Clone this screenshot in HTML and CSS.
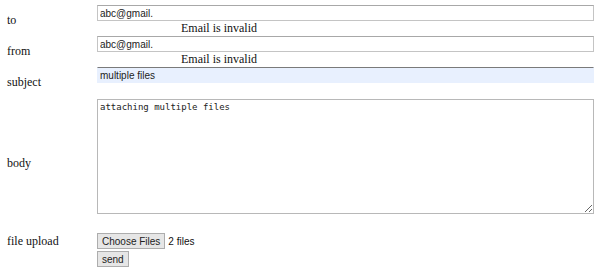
FILE: index.html
```html
<!DOCTYPE html>
<html lang="en">
<head>
    <meta charset="UTF-8">
    <title>Send mail</title>
    <link rel="stylesheet" href="styles.css">
</head>
<body>
    <form class="mail-form">
        <div class="row">
            <label class="label">to</label>
            <div class="field">
                <input type="text" class="text-input" value="abc@gmail." spellcheck="false">
                <div class="msg">Email is invalid</div>
            </div>
        </div>
        <div class="row">
            <label class="label">from</label>
            <div class="field">
                <input type="text" class="text-input" value="abc@gmail." spellcheck="false">
                <div class="msg">Email is invalid</div>
            </div>
        </div>
        <div class="row">
            <label class="label">subject</label>
            <div class="field">
                <input type="text" class="text-input filled" value="multiple files" spellcheck="false">
                <div class="msg"></div>
            </div>
        </div>
        <div class="row">
            <label class="label">body</label>
            <div class="field">
                <textarea class="body-input" spellcheck="false">attaching multiple files</textarea>
                <div class="msg"></div>
            </div>
        </div>
        <div class="row upload-row">
            <label class="label">file upload</label>
            <div class="field file-field">
                <button type="button" class="btn">Choose Files</button>
                <span class="file-count">2 files</span>
            </div>
        </div>
        <div class="row">
            <span class="label"></span>
            <div class="field">
                <button type="button" class="btn">send</button>
            </div>
        </div>
    </form>
</body>
</html>
```

FILE: styles.css
```css
body {
    margin: 0;
    padding: 5px 0 0 7px;
    font-family: "Liberation Serif", "Times New Roman", serif;
    font-size: 12px;
    color: #111;
    background: #fff;
}

.row {
    display: flex;
    align-items: center;
    margin-bottom: 1px;
}

.label {
    width: 90px;
    flex: none;
}

.field {
    width: 497px;
}

.text-input {
    display: block;
    box-sizing: border-box;
    width: 497px;
    height: 16px;
    margin: 0;
    padding: 0 2px;
    border: 1px solid #c4c4c4;
    border-top-color: #a8a8a8;
    font-family: "Liberation Sans", Arial, sans-serif;
    font-size: 10px;
    color: #222;
    outline: none;
}

.text-input.filled {
    background: #e8f0fe;
    border-color: #e8f0fe;
    border-top-color: #7a7a7a;
}

.msg {
    height: 14px;
    line-height: 14px;
    padding-left: 84px;
    font-size: 12px;
}

.body-input {
    display: block;
    box-sizing: border-box;
    width: 497px;
    height: 115px;
    margin: 1px 0 0;
    padding: 2px;
    border: 1px solid #b8b8b8;
    font-family: "DejaVu Sans Mono", "Liberation Mono", monospace;
    font-size: 9px;
    color: #222;
    outline: none;
}

.upload-row {
    margin-top: 5px;
    margin-bottom: 2px;
}

.file-field {
    display: flex;
    align-items: center;
    gap: 3px;
}

.btn {
    box-sizing: border-box;
    height: 16px;
    margin: 0;
    padding: 0 4px;
    border: 1px solid #adadad;
    background: #e6e6e6;
    font-family: "Liberation Sans", Arial, sans-serif;
    font-size: 10px;
    color: #222;
}

.file-count {
    font-family: "Liberation Sans", Arial, sans-serif;
    font-size: 10px;
}
```
